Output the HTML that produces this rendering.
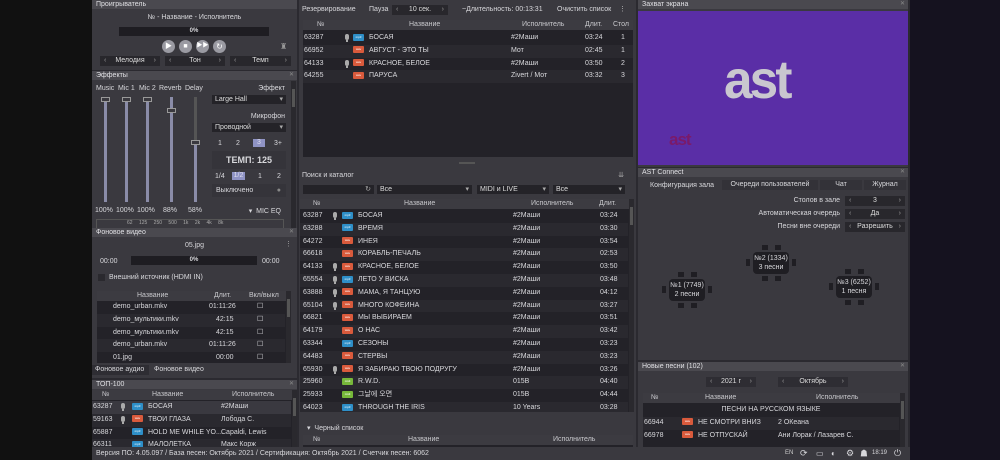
<!DOCTYPE html>
<html><head><meta charset="utf-8">
<style>
*{box-sizing:border-box;margin:0;padding:0}
body{width:1000px;height:460px;overflow:hidden;background:#111;font-family:"Liberation Sans","Noto Sans CJK KR",sans-serif;font-size:7px;color:#d8d8dc;position:relative}
.a{position:absolute}
.pan{position:absolute;background:#3a393f}
.tt{position:absolute;left:0;right:0;top:0;height:9px;background:#4a494f;color:#e0e0e4;font-size:7px;line-height:9px;padding-left:4px}
.tt i{position:absolute;right:3px;top:0;font-style:normal;color:#888;font-size:6px}
.tbl{position:absolute;background:#232228;overflow:hidden}
.hd{position:absolute;left:0;right:0;top:0;height:10px;background:#3c3b41;color:#c8c8cc;line-height:10px}
.hd span,.r span{position:absolute;white-space:nowrap}
.r{position:absolute;left:0;right:0;height:12.8px;line-height:12.8px}
.r:nth-child(even){background:#2a292f}
.b{display:inline-block;width:11px;height:7px;border-radius:1px;vertical-align:middle;font-size:3px;line-height:7px;text-align:center;color:#fff;font-style:normal}
.m{background:#2e8fc8}.w{background:#d95a3c}.g{background:#77b83a}
.mic{display:inline-block;width:4px;height:6px;border-radius:2px;background:#aaa;vertical-align:middle;position:relative}
.mic:after{content:"";position:absolute;left:1px;top:6px;width:2px;height:2px;background:#aaa}
.st{position:absolute;height:10px;background:#28272c;color:#ddd;text-align:center;line-height:10px}
.st:before{content:"‹";position:absolute;left:4px;color:#999}
.st:after{content:"›";position:absolute;right:4px;color:#999}
.dd{position:absolute;height:9px;background:#242328;color:#ddd;line-height:9px;padding-left:3px}
.dd:after{content:"▾";position:absolute;right:3px;color:#aaa}
.sl{position:absolute;width:3px;background:#8a8ca8;height:105px}
.kn{position:absolute;width:9px;height:5px;background:#3a393f;border:1px solid #999;left:-3px}
.sb{position:absolute;width:5px;background:#2a292e}
.sb:after{content:"";position:absolute;left:1px;right:1px;top:8px;height:18px;background:#555}
</style></head><body>
<div class="a" style="left:910px;top:0;width:90px;height:460px;background:#15121f"></div>
<div class="a" style="left:92px;top:0;width:818px;height:460px;background:#2b2a30"></div>

<!-- Player -->
<div class="pan" style="left:92px;top:0;width:205px;height:70px">
 <div class="tt">Проигрыватель</div>
 <div class="a" style="left:0;right:0;top:14px;text-align:center">№ - Название - Исполнитель</div>
 <div class="a" style="left:27px;width:150px;top:27px;height:9px;background:#1e1d22;text-align:center;line-height:9px;font-weight:bold;font-size:6px">0%</div>
 <div class="a" style="left:70px;top:40px;width:13px;height:13px;border-radius:50%;background:#9a9aa2;color:#fff;text-align:center;line-height:13px;font-size:7px">▶</div>
 <div class="a" style="left:87px;top:40px;width:13px;height:13px;border-radius:50%;background:#9a9aa2;color:#fff;text-align:center;line-height:13px;font-size:7px">■</div>
 <div class="a" style="left:104px;top:40px;width:13px;height:13px;border-radius:50%;background:#9a9aa2;color:#fff;text-align:center;line-height:13px;font-size:6px">▶▶</div>
 <div class="a" style="left:121px;top:40px;width:13px;height:13px;border-radius:50%;background:#9a9aa2;color:#fff;text-align:center;line-height:13px;font-size:8px">↻</div>
 <div class="a" style="left:188px;top:42px;color:#999;font-size:8px">♜</div>
 <div class="st" style="left:8px;top:56px;width:60px">Мелодия</div>
 <div class="st" style="left:73px;top:56px;width:60px">Тон</div>
 <div class="st" style="left:138px;top:56px;width:61px">Темп</div>
</div>

<!-- Effects -->
<div class="pan" style="left:92px;top:71px;width:205px;height:157px">
 <div class="tt">Эффекты<i>✕</i></div>
 <div class="a" style="left:4px;top:14px">Music</div>
 <div class="a" style="left:26px;top:14px">Mic 1</div>
 <div class="a" style="left:47px;top:14px">Mic 2</div>
 <div class="a" style="left:67px;top:14px">Reverb</div>
 <div class="a" style="left:93px;top:14px">Delay</div>
 <div class="sl" style="left:12px;top:26px"><div class="kn" style="top:0"></div></div>
 <div class="sl" style="left:33px;top:26px"><div class="kn" style="top:0"></div></div>
 <div class="sl" style="left:54px;top:26px"><div class="kn" style="top:0"></div></div>
 <div class="sl" style="left:78px;top:26px"><div class="kn" style="top:11px"></div></div>
 <div class="sl" style="left:102px;top:26px;background:linear-gradient(#555 43%,#8a8ca8 43%)"><div class="kn" style="top:43px"></div></div>
 <div class="a" style="left:3px;top:136px">100%</div>
 <div class="a" style="left:24px;top:136px">100%</div>
 <div class="a" style="left:45px;top:136px">100%</div>
 <div class="a" style="left:71px;top:136px">88%</div>
 <div class="a" style="left:96px;top:136px">58%</div>
 <div class="a" style="right:12px;top:14px">Эффект</div>
 <div class="dd" style="left:120px;top:24px;width:74px">Large Hall</div>
 <div class="a" style="right:12px;top:42px">Микрофон</div>
 <div class="dd" style="left:120px;top:52px;width:74px">Проводной</div>
 <div class="a" style="left:126px;top:69px">1</div>
 <div class="a" style="left:144px;top:69px">2</div>
 <div class="a" style="left:161px;top:68px;width:12px;height:8px;background:#8f93c4;text-align:center;color:#dde">3</div>
 <div class="a" style="left:182px;top:69px">3+</div>
 <div class="a" style="left:120px;top:80px;width:74px;height:18px;background:#35343a;text-align:center;line-height:18px;font-size:9px;font-weight:bold">ТЕМП: 125</div>
 <div class="a" style="left:123px;top:102px">1/4</div>
 <div class="a" style="left:140px;top:101px;width:13px;height:8px;background:#8f93c4;text-align:center;color:#dde">1/2</div>
 <div class="a" style="left:166px;top:102px">1</div>
 <div class="a" style="left:185px;top:102px">2</div>
 <div class="a" style="left:120px;top:113px;width:74px;height:13px;background:#35343a;line-height:13px;padding-left:4px">Выключено<span style="position:absolute;right:5px;color:#888">●</span></div>
 <div class="a" style="right:16px;top:136px">▾ &nbsp;MIC EQ</div>
 <div class="a" style="left:4px;top:148px;width:188px;height:9px;border:1px solid #555;border-bottom:none;font-size:5px;color:#aaa;padding-left:30px;word-spacing:5px">62 125 250 500 1k 2k 4k 8k</div>
 <div class="sb" style="right:1px;top:10px;height:147px"></div>
</div>

<!-- Background video -->
<div class="pan" style="left:92px;top:228px;width:205px;height:150px">
 <div class="tt">Фоновое видео<i>✕</i></div>
 <div class="a" style="left:0;right:0;top:14px;text-align:center">05.jpg</div>
 <div class="a" style="right:5px;top:12px;color:#aaa">⋮</div>
 <div class="a" style="left:8px;top:30px">00:00</div>
 <div class="a" style="left:39px;top:28px;width:126px;height:9px;background:#1e1d22;text-align:center;line-height:9px;font-weight:bold;font-size:6px">0%</div>
 <div class="a" style="left:170px;top:30px">00:00</div>
 <div class="a" style="left:6px;top:46px;width:7px;height:7px;background:#2a292e"></div>
 <div class="a" style="left:17px;top:46px">Внешний источник (HDMI IN)</div>
 <div class="tbl" style="left:5px;top:63px;width:194px;height:72px">
  <div class="hd"><span style="left:40px">Название</span><span style="left:117px">Длит.</span><span style="left:152px">Вкл/выкл</span></div>
  <div style="position:absolute;top:10px;left:0;right:6px;bottom:0">
   <div class="r" style="top:0"><span style="left:16px">demo_urban.mkv</span><span style="left:112px">01:11:26</span><span style="left:160px">☐</span></div>
   <div class="r" style="top:12.8px"><span style="left:16px">demo_мультики.mkv</span><span style="left:119px">42:15</span><span style="left:160px">☐</span></div>
   <div class="r" style="top:25.6px"><span style="left:16px">demo_мультики.mkv</span><span style="left:119px">42:15</span><span style="left:160px">☐</span></div>
   <div class="r" style="top:38.4px"><span style="left:16px">demo_urban.mkv</span><span style="left:112px">01:11:26</span><span style="left:160px">☐</span></div>
   <div class="r" style="top:51.2px"><span style="left:16px">01.jpg</span><span style="left:119px">00:00</span><span style="left:160px">☐</span></div>
  </div>
  <div class="sb" style="right:0;top:0;height:72px"></div>
 </div>
 <div class="a" style="left:0;top:137px;width:57px;height:10px;background:#2e2d33;line-height:10px;padding-left:3px">Фоновое аудио</div>
 <div class="a" style="left:62px;top:137px;line-height:10px">Фоновое видео</div>
</div>

<!-- TOP-100 -->
<div class="pan" style="left:92px;top:380px;width:205px;height:67px">
 <div class="tt">ТОП-100<i>✕</i></div>
 <div class="tbl" style="left:0;top:10px;width:205px;height:57px">
  <div class="hd"><span style="left:10px">№</span><span style="left:60px">Название</span><span style="left:140px">Исполнитель</span></div>
  <div style="position:absolute;top:11px;left:0;right:6px;bottom:0">
   <div class="r" style="top:0;background:#3a3940"><span style="left:1px">63287</span><span style="left:29px"><i class="mic"></i></span><span style="left:40px"><i class="b m">mp3</i></span><span style="left:56px">БОСАЯ</span><span style="left:129px">#2Маши</span></div>
   <div class="r" style="top:12.8px"><span style="left:1px">59163</span><span style="left:29px"><i class="mic"></i></span><span style="left:40px"><i class="b w">wav</i></span><span style="left:56px">ТВОИ ГЛАЗА</span><span style="left:129px">Лобода С.</span></div>
   <div class="r" style="top:25.6px"><span style="left:1px">65887</span><span style="left:40px"><i class="b m">mp3</i></span><span style="left:56px">HOLD ME WHILE YO...</span><span style="left:129px">Capaldi, Lewis</span></div>
   <div class="r" style="top:38.4px"><span style="left:1px">66311</span><span style="left:40px"><i class="b m">mp3</i></span><span style="left:56px">МАЛОЛЕТКА</span><span style="left:129px">Макс Корж</span></div>
  </div>
  <div class="sb" style="right:0;top:0;height:57px"></div>
 </div>
</div>

<!-- Reservation -->
<div class="pan" style="left:299px;top:0;width:337px;height:167px">
 <div class="a" style="left:3px;top:6px">Резервирование</div>
 <div class="a" style="left:70px;top:6px">Пауза</div>
 <div class="st" style="left:93px;top:5px;width:56px">10 сек.</div>
 <div class="a" style="left:163px;top:6px">~Длительность: 00:13:31</div>
 <div class="a" style="left:258px;top:6px">Очистить список</div>
 <div class="a" style="left:320px;top:5px;color:#bbb">⋮</div>
 <div class="tbl" style="left:4px;top:20px;width:330px;height:137px">
  <div class="hd"><span style="left:14px">№</span><span style="left:106px">Название</span><span style="left:219px">Исполнитель</span><span style="left:282px">Длит.</span><span style="left:310px">Стол</span></div>
  <div style="position:absolute;top:12px;left:0;right:0">
   <div class="r" style="top:0"><span style="left:1px">63287</span><span style="left:42px"><i class="mic"></i></span><span style="left:50px"><i class="b m">mp3</i></span><span style="left:66px">БОСАЯ</span><span style="left:208px">#2Маши</span><span style="left:282px">03:24</span><span style="left:318px">1</span></div>
   <div class="r" style="top:12.8px"><span style="left:1px">66952</span><span style="left:50px"><i class="b w">wav</i></span><span style="left:66px">АВГУСТ - ЭТО ТЫ</span><span style="left:208px">Мот</span><span style="left:282px">02:45</span><span style="left:318px">1</span></div>
   <div class="r" style="top:25.6px"><span style="left:1px">64133</span><span style="left:42px"><i class="mic"></i></span><span style="left:50px"><i class="b w">wav</i></span><span style="left:66px">КРАСНОЕ, БЕЛОЕ</span><span style="left:208px">#2Маши</span><span style="left:282px">03:50</span><span style="left:318px">2</span></div>
   <div class="r" style="top:38.4px"><span style="left:1px">64255</span><span style="left:50px"><i class="b w">wav</i></span><span style="left:66px">ПАРУСА</span><span style="left:208px">Zivert / Мот</span><span style="left:282px">03:32</span><span style="left:318px">3</span></div>
  </div>
 </div>
 <div class="a" style="left:160px;top:162px;width:16px;height:2px;background:#555"></div>
</div>

<!-- Catalog -->
<div class="pan" style="left:299px;top:167px;width:337px;height:280px">
 <div class="a" style="left:3px;top:5px">Поиск и каталог</div>
 <div class="a" style="right:12px;top:4px;color:#aaa">⇊</div>
 <div class="a" style="left:4px;top:18px;width:71px;height:9px;background:#242328"><span style="position:absolute;right:3px;color:#aaa;line-height:9px">↻</span></div>
 <div class="dd" style="left:78px;top:18px;width:95px">Все</div>
 <div class="dd" style="left:178px;top:18px;width:72px">MIDI и LIVE</div>
 <div class="dd" style="left:254px;top:18px;width:72px">Все</div>
 <div class="tbl" style="left:1px;top:32px;width:334px;height:213px">
  <div class="hd"><span style="left:13px">№</span><span style="left:104px">Название</span><span style="left:231px">Исполнитель</span><span style="left:299px">Длит.</span></div>
  <div style="position:absolute;top:11px;left:0;right:6px;bottom:0">
   <div class="r" style="top:0"><span style="left:3px">63287</span><span style="left:33px"><i class="mic"></i></span><span style="left:42px"><i class="b m">mp3</i></span><span style="left:58px">БОСАЯ</span><span style="left:213px">#2Маши</span><span style="left:300px">03:24</span></div>
   <div class="r" style="top:12.8px"><span style="left:3px">63288</span><span style="left:42px"><i class="b m">mp3</i></span><span style="left:58px">ВРЕМЯ</span><span style="left:213px">#2Маши</span><span style="left:300px">03:30</span></div>
   <div class="r" style="top:25.6px"><span style="left:3px">64272</span><span style="left:42px"><i class="b w">wav</i></span><span style="left:58px">ИНЕЯ</span><span style="left:213px">#2Маши</span><span style="left:300px">03:54</span></div>
   <div class="r" style="top:38.4px"><span style="left:3px">66618</span><span style="left:42px"><i class="b w">wav</i></span><span style="left:58px">КОРАБЛЬ-ПЕЧАЛЬ</span><span style="left:213px">#2Маши</span><span style="left:300px">02:53</span></div>
   <div class="r" style="top:51.2px"><span style="left:3px">64133</span><span style="left:33px"><i class="mic"></i></span><span style="left:42px"><i class="b w">wav</i></span><span style="left:58px">КРАСНОЕ, БЕЛОЕ</span><span style="left:213px">#2Маши</span><span style="left:300px">03:50</span></div>
   <div class="r" style="top:64px"><span style="left:3px">65554</span><span style="left:33px"><i class="mic"></i></span><span style="left:42px"><i class="b m">mp3</i></span><span style="left:58px">ЛЕТО У ВИСКА</span><span style="left:213px">#2Маши</span><span style="left:300px">03:48</span></div>
   <div class="r" style="top:76.8px"><span style="left:3px">63888</span><span style="left:33px"><i class="mic"></i></span><span style="left:42px"><i class="b w">wav</i></span><span style="left:58px">МАМА, Я ТАНЦУЮ</span><span style="left:213px">#2Маши</span><span style="left:300px">04:12</span></div>
   <div class="r" style="top:89.6px"><span style="left:3px">65104</span><span style="left:33px"><i class="mic"></i></span><span style="left:42px"><i class="b w">wav</i></span><span style="left:58px">МНОГО КОФЕИНА</span><span style="left:213px">#2Маши</span><span style="left:300px">03:27</span></div>
   <div class="r" style="top:102.4px"><span style="left:3px">66821</span><span style="left:42px"><i class="b w">wav</i></span><span style="left:58px">МЫ ВЫБИРАЕМ</span><span style="left:213px">#2Маши</span><span style="left:300px">03:51</span></div>
   <div class="r" style="top:115.2px"><span style="left:3px">64179</span><span style="left:42px"><i class="b w">wav</i></span><span style="left:58px">О НАС</span><span style="left:213px">#2Маши</span><span style="left:300px">03:42</span></div>
   <div class="r" style="top:128px"><span style="left:3px">63344</span><span style="left:42px"><i class="b m">mp3</i></span><span style="left:58px">СЕЗОНЫ</span><span style="left:213px">#2Маши</span><span style="left:300px">03:23</span></div>
   <div class="r" style="top:140.8px"><span style="left:3px">64483</span><span style="left:42px"><i class="b w">wav</i></span><span style="left:58px">СТЕРВЫ</span><span style="left:213px">#2Маши</span><span style="left:300px">03:23</span></div>
   <div class="r" style="top:153.6px"><span style="left:3px">65930</span><span style="left:33px"><i class="mic"></i></span><span style="left:42px"><i class="b w">wav</i></span><span style="left:58px">Я ЗАБИРАЮ ТВОЮ ПОДРУГУ</span><span style="left:213px">#2Маши</span><span style="left:300px">03:26</span></div>
   <div class="r" style="top:166.4px"><span style="left:3px">25960</span><span style="left:42px"><i class="b g">midi</i></span><span style="left:58px">R.W.D.</span><span style="left:213px">015B</span><span style="left:300px">04:40</span></div>
   <div class="r" style="top:179.2px"><span style="left:3px">25933</span><span style="left:42px"><i class="b g">midi</i></span><span style="left:58px">그날에 오면</span><span style="left:213px">015B</span><span style="left:300px">04:44</span></div>
   <div class="r" style="top:192px"><span style="left:3px">64023</span><span style="left:42px"><i class="b m">mp3</i></span><span style="left:58px">THROUGH THE IRIS</span><span style="left:213px">10 Years</span><span style="left:300px">03:28</span></div>
  </div>
  <div class="sb" style="right:0;top:0;height:213px"></div>
 </div>
 <div class="a" style="left:8px;top:257px">▾ &nbsp;Черный список</div>
 <div class="tbl" style="left:4px;top:268px;width:330px;height:12px">
  <div class="hd"><span style="left:10px">№</span><span style="left:105px">Название</span><span style="left:250px">Исполнитель</span></div>
 </div>
</div>

<!-- Screen capture -->
<div class="pan" style="left:638px;top:0;width:270px;height:167px">
 <div class="tt">Захват экрана<i>✕</i></div>
 <div class="a" style="left:0;top:11px;width:270px;height:154px;background:#5a2ea6;overflow:hidden">
  <div class="a" style="left:86px;top:42px;color:#c9c7cf;font-size:54px;font-weight:bold;letter-spacing:-3px;line-height:54px;transform:scaleX(0.95);transform-origin:left">ast</div>
  <div class="a" style="left:31px;top:120px;color:#7a1a6a;font-size:17px;font-weight:bold;letter-spacing:-1px;line-height:17px">ast</div>
 </div>
</div>

<!-- AST Connect -->
<div class="pan" style="left:638px;top:168px;width:270px;height:192px">
 <div class="tt">AST Connect<i>✕</i></div>
 <div class="a" style="left:12px;top:14px">Конфигурация зала</div>
 <div class="a" style="left:84px;top:12px;width:96px;height:10px;background:#333238;text-align:center;line-height:10px">Очереди пользователей</div>
 <div class="a" style="left:182px;top:12px;width:42px;height:10px;background:#333238;text-align:center;line-height:10px">Чат</div>
 <div class="a" style="left:226px;top:12px;width:42px;height:10px;background:#333238;text-align:center;line-height:10px">Журнал</div>
 <div class="a" style="right:68px;top:29px">Столов в зале</div>
 <div class="st" style="left:207px;top:28px;width:60px;background:#28272c">3</div>
 <div class="a" style="right:68px;top:42px">Автоматическая очередь</div>
 <div class="st" style="left:207px;top:41px;width:60px">Да</div>
 <div class="a" style="right:68px;top:55px">Песни вне очереди</div>
 <div class="st" style="left:207px;top:54px;width:60px">Разрешить</div>
 <div class="a" style="left:31px;top:111px;width:36px;height:22px;background:#1f1e23;border-radius:4px;text-align:center;line-height:9px;padding-top:2px">№1 (7749)<br>2 песни</div>
 <div class="a" style="left:115px;top:84px;width:36px;height:22px;background:#1f1e23;border-radius:4px;text-align:center;line-height:9px;padding-top:2px">№2 (1334)<br>3 песни</div>
 <div class="a" style="left:198px;top:108px;width:36px;height:22px;background:#1f1e23;border-radius:4px;text-align:center;line-height:9px;padding-top:2px">№3 (6252)<br>1 песня</div>
 <div class="a" style="left:40px;top:104px;width:6px;height:5px;background:#1f1e23"></div><div class="a" style="left:53px;top:104px;width:6px;height:5px;background:#1f1e23"></div>
 <div class="a" style="left:40px;top:135px;width:6px;height:5px;background:#1f1e23"></div><div class="a" style="left:53px;top:135px;width:6px;height:5px;background:#1f1e23"></div>
 <div class="a" style="left:24px;top:118px;width:4px;height:7px;background:#1f1e23"></div><div class="a" style="left:70px;top:118px;width:4px;height:7px;background:#1f1e23"></div>
 <div class="a" style="left:124px;top:77px;width:6px;height:5px;background:#1f1e23"></div><div class="a" style="left:137px;top:77px;width:6px;height:5px;background:#1f1e23"></div>
 <div class="a" style="left:124px;top:108px;width:6px;height:5px;background:#1f1e23"></div><div class="a" style="left:137px;top:108px;width:6px;height:5px;background:#1f1e23"></div>
 <div class="a" style="left:108px;top:91px;width:4px;height:7px;background:#1f1e23"></div><div class="a" style="left:154px;top:91px;width:4px;height:7px;background:#1f1e23"></div>
 <div class="a" style="left:207px;top:101px;width:6px;height:5px;background:#1f1e23"></div><div class="a" style="left:220px;top:101px;width:6px;height:5px;background:#1f1e23"></div>
 <div class="a" style="left:207px;top:132px;width:6px;height:5px;background:#1f1e23"></div><div class="a" style="left:220px;top:132px;width:6px;height:5px;background:#1f1e23"></div>
 <div class="a" style="left:191px;top:115px;width:4px;height:7px;background:#1f1e23"></div><div class="a" style="left:237px;top:115px;width:4px;height:7px;background:#1f1e23"></div>
</div>

<!-- New songs -->
<div class="pan" style="left:638px;top:362px;width:270px;height:85px">
 <div class="tt">Новые песни (102)<i>✕</i></div>
 <div class="st" style="left:68px;top:15px;width:50px;background:#2e2d33">2021 г</div>
 <div class="st" style="left:140px;top:15px;width:70px;background:#2e2d33">Октябрь</div>
 <div class="tbl" style="left:5px;top:31px;width:262px;height:54px">
  <div class="hd"><span style="left:8px">№</span><span style="left:62px">Название</span><span style="left:173px">Исполнитель</span></div>
  <div style="position:absolute;top:11px;left:0;right:6px">
   <div class="r" style="top:0;background:#232228;text-align:center"><span style="left:0;right:0">ПЕСНИ НА РУССКОМ ЯЗЫКЕ</span></div>
   <div class="r" style="top:12.8px;background:#2a292f"><span style="left:1px">66944</span><span style="left:39px"><i class="b w">wav</i></span><span style="left:55px">НЕ СМОТРИ ВНИЗ</span><span style="left:135px">2 ОКеана</span></div>
   <div class="r" style="top:25.6px;background:#232228"><span style="left:1px">66978</span><span style="left:39px"><i class="b w">wav</i></span><span style="left:55px">НЕ ОТПУСКАЙ</span><span style="left:135px">Ани Лорак / Лазарев С.</span></div>
  </div>
  <div class="sb" style="right:0;top:0;height:54px"></div>
 </div>
</div>

<!-- Status bar -->
<div class="a" style="left:92px;top:447px;width:818px;height:13px;background:#3a393f;line-height:13px;padding-left:4px">Версия ПО: 4.05.097 / База песен: Октябрь 2021 / Сертификация: Октябрь 2021 / Счетчик песен: 6062
 <span style="position:absolute;left:693px;color:#ccc;font-size:6px">EN</span>
 <span style="position:absolute;left:708px;font-size:9px">⟳</span>
 <span style="position:absolute;left:724px;font-size:8px">▭</span>
 <span style="position:absolute;left:739px;font-size:8px">◐</span>
 <span style="position:absolute;left:754px;font-size:9px">⚙</span>
 <span style="position:absolute;left:768px;font-size:8px">☗</span>
 <span style="position:absolute;left:780px;font-size:6px">18:19</span>
 <span style="position:absolute;left:802px;font-size:9px">⏻</span>
</div>
</body></html>
